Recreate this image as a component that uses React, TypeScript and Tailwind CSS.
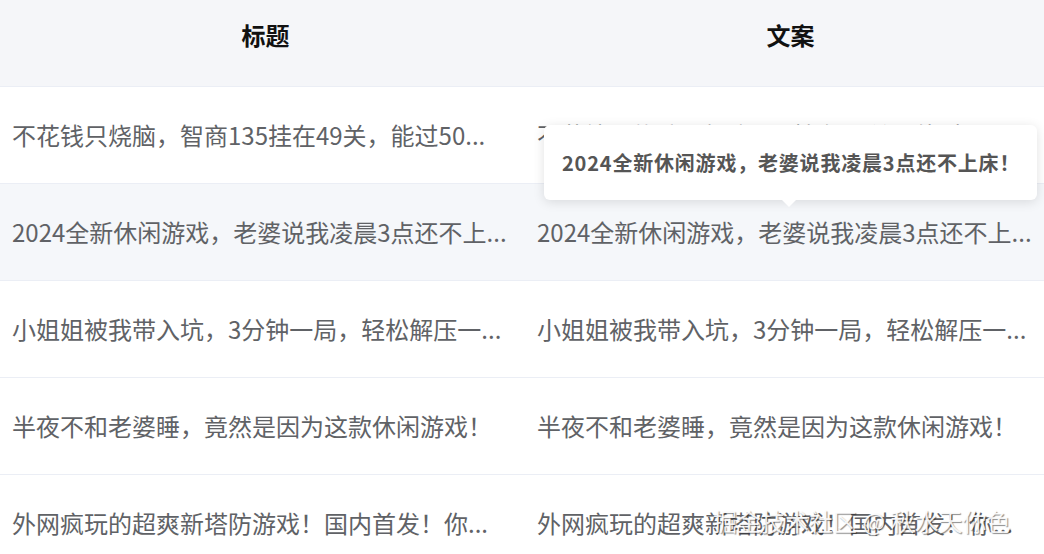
const rows = [
  {
    title: "不花钱只烧脑，智商135挂在49关，能过50...",
    copy: "不花钱只烧脑，智商135挂在49关，能过50...",
  },
  {
    title: "2024全新休闲游戏，老婆说我凌晨3点还不上...",
    copy: "2024全新休闲游戏，老婆说我凌晨3点还不上...",
  },
  {
    title: "小姐姐被我带入坑，3分钟一局，轻松解压一...",
    copy: "小姐姐被我带入坑，3分钟一局，轻松解压一...",
  },
  {
    title: "半夜不和老婆睡，竟然是因为这款休闲游戏！",
    copy: "半夜不和老婆睡，竟然是因为这款休闲游戏！",
  },
  {
    title: "外网疯玩的超爽新塔防游戏！国内首发！你...",
    copy: "外网疯玩的超爽新塔防游戏！国内首发！你...",
  },
];

function App() {
  return (
    <div className="relative h-[554px] w-[1044px] overflow-hidden bg-white font-['Noto_Sans_CJK_SC','Noto_Sans',sans-serif]">
      <div className="w-[1050px]">
        {/* Header */}
        <div className="flex h-[87px] border-b border-[#ebeef5] bg-[#f5f6f9] pb-4">
          <div className="flex w-[525px] items-center justify-center pl-[6px] text-[24px] font-bold text-[#111]">
            标题
          </div>
          <div className="flex w-[525px] items-center justify-center pl-[6px] text-[24px] font-bold text-[#111]">
            文案
          </div>
        </div>

        {/* Rows */}
        {rows.map((row, i) => (
          <div
            key={i}
            className={`flex h-[97px] items-center border-b border-[#ebeef5] text-[24px] text-[#606266] ${
              i === 1 ? "bg-[#f5f7fa]" : "bg-white"
            }`}
          >
            <div className="w-[525px] overflow-hidden whitespace-nowrap px-3">{row.title}</div>
            <div className="w-[525px] overflow-hidden whitespace-nowrap px-3">{row.copy}</div>
          </div>
        ))}
      </div>

      {/* Tooltip */}
      <div className="absolute left-[544px] top-[125px] flex h-[75px] w-[493px] items-center whitespace-nowrap rounded-md bg-white px-[18px] text-[20px] font-bold tracking-[0.8px] text-[#555] shadow-[0_2px_12px_rgba(0,0,0,0.12)]">
        2024全新休闲游戏，老婆说我凌晨3点还不上床！
        <div className="absolute left-[238px] top-full h-0 w-0 border-x-[7px] border-t-[7px] border-x-transparent border-t-white" />
      </div>

      {/* Watermark */}
      <div className="absolute left-[713px] top-[503px] whitespace-pre text-[24px] text-white/90 [text-shadow:1px_1px_1px_rgba(0,0,0,0.45)]">
        掘金技术社区 @ 秋水天你色
      </div>
    </div>
  );
}

export default App;
